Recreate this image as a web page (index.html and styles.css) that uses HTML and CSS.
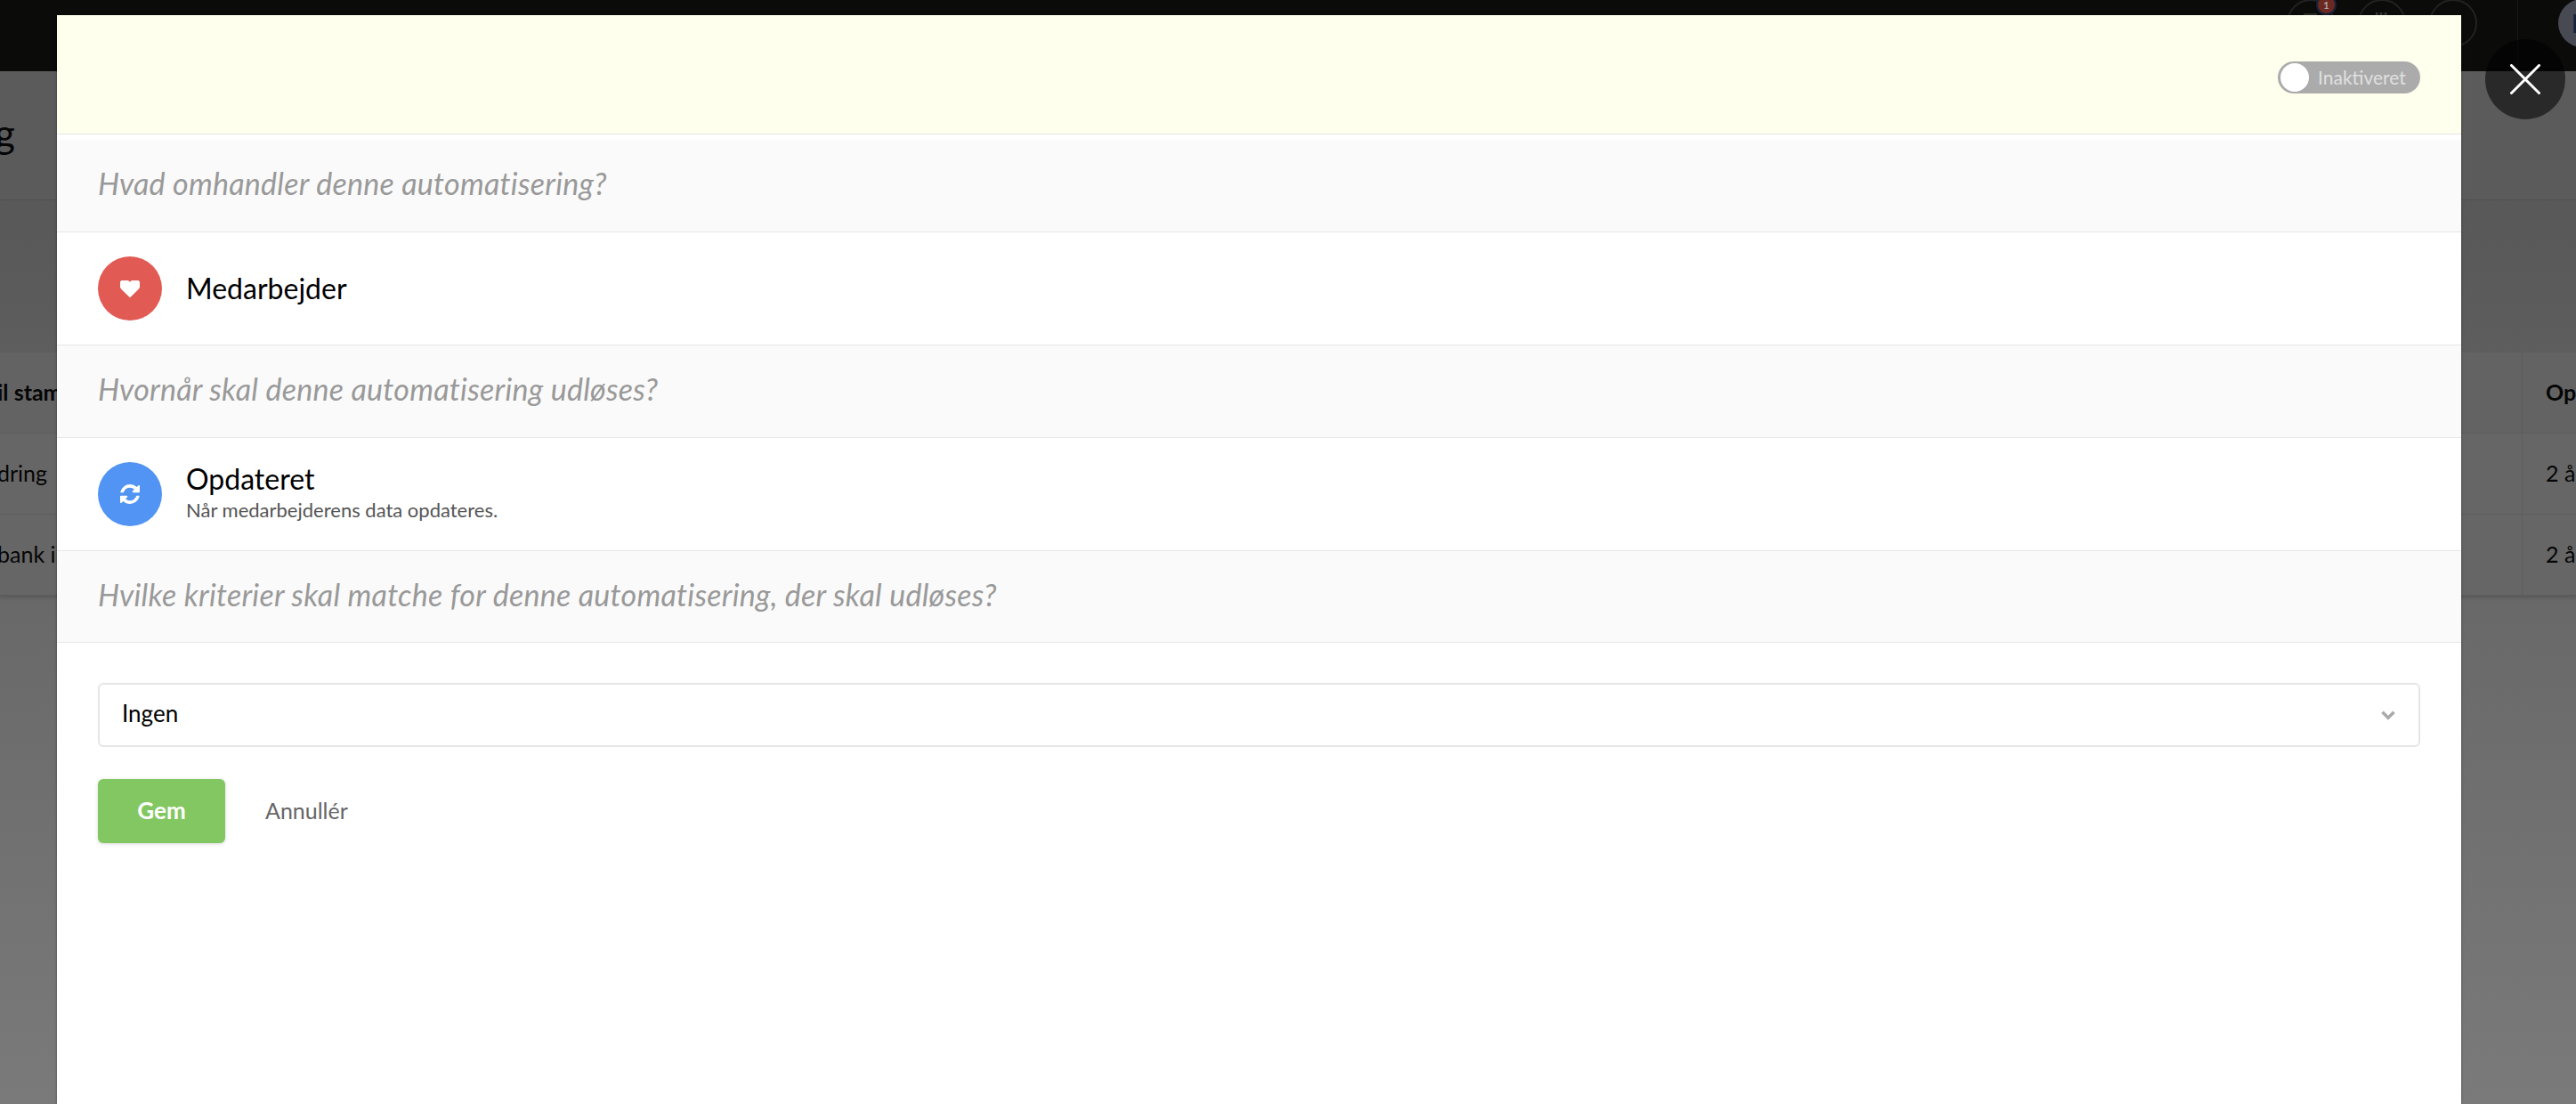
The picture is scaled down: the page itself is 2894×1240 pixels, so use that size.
FILE: index.html
```html
<!DOCTYPE html>
<html lang="da">
<head>
<meta charset="utf-8">
<title>Automatisering</title>
<link rel="stylesheet" href="styles.css">
</head>
<body>
<div class="page">
  <header class="topbar">
    <div class="nav-circle nav-bell"><span class="badge">1</span></div>
    <div class="nav-circle nav-cal"></div>
    <div class="nav-circle"></div>
    <div class="nav-divider"></div>
    <div class="avatar">E</div>
  </header>
  <div class="subheader"><h1 class="page-title">g</h1></div>
  <div class="table">
    <div class="table-row table-head"><div class="cell-main">il stamdata</div><div class="cell-end">Opdateret</div></div>
    <div class="table-row"><div class="cell-main">dring</div><div class="cell-end">2 år siden</div></div>
    <div class="table-row"><div class="cell-main">bank ikke</div><div class="cell-end">2 år siden</div></div>
  </div>
</div>

<button class="close-btn" aria-label="Luk">
  <svg class="close-icon" viewBox="0 0 34 34"><path d="M1.5 1.5 32.5 32.5M32.5 1.5 1.5 32.5"/></svg>
</button>

<main class="modal">
  <div class="modal-head">
    <div class="toggle"><span class="toggle-knob"></span><span class="toggle-label">Inaktiveret</span></div>
  </div>
  <div class="q-bar q-first">Hvad omhandler denne automatisering?</div>
  <div class="choice">
    <span class="dot dot-red">
      <svg class="icon-heart" viewBox="110 220 1572 1450"><path d="M896 1664q-26 0-44-18l-624-602q-10-8-27.5-26t-55.5-65.5-68-97.5-53.5-121-23.5-138q0-220 127-344t351-124q62 0 126.5 21.5t120 58 95.5 68.5 76 68q36-36 76-68t95.5-68.5 120-58 126.5-21.5q224 0 351 124t127 344q0 221-229 450l-623 600q-18 18-44 18z"/></svg>
    </span>
    <div class="choice-text"><div class="choice-title">Medarbejder</div></div>
  </div>
  <div class="q-bar">Hvornår skal denne automatisering udløses?</div>
  <div class="choice">
    <span class="dot dot-blue">
      <svg class="icon-refresh" viewBox="128 128 1536 1536"><path d="M1639 1056q0 5-1 7-64 268-268 434.5t-478 166.5q-146 0-282.5-55t-243.5-157l-129 129q-19 19-45 19t-45-19-19-45v-448q0-26 19-45t45-19h448q26 0 45 19t19 45-19 45l-137 137q71 66 161 102t187 36q134 0 250-65t186-179q11-17 53-117 8-23 30-23h192q13 0 22.5 9.5t9.5 22.5zm25-800v448q0 26-19 45t-45 19h-448q-26 0-45-19t-19-45 19-45l138-138q-148-137-349-137-134 0-250 65t-186 179q-11 17-53 117-8 23-30 23h-199q-13 0-22.5-9.5t-9.5-22.5v-7q65-268 270-434.5t480-166.5q146 0 284 55.5t245 156.5l130-129q19-19 45-19t45 19 19 45z"/></svg>
    </span>
    <div class="choice-text">
      <div class="choice-title">Opdateret</div>
      <div class="choice-sub">Når medarbejderens data opdateres.</div>
    </div>
  </div>
  <div class="q-bar q-last">Hvilke kriterier skal matche for denne automatisering, der skal udløses?</div>
  <div class="form">
    <div class="select">
      <span>Ingen</span>
      <svg class="chevron" viewBox="0 0 16 11"><path d="M1.5 1.8 8 8.3 14.5 1.8"/></svg>
    </div>
    <div class="actions">
      <button class="btn-save">Gem</button>
      <span class="btn-cancel">Annullér</span>
    </div>
  </div>
</main>
</body>
</html>
```
FILE: styles.css
```css
* { box-sizing: border-box; }
html, body { margin: 0; height: 100%; }
body {
  width: 2894px;
  height: 1240px;
  overflow: hidden;
  position: relative;
  font-family: "Lato", "Liberation Sans", sans-serif;
  background: #6a6a6a;
}

/* dimmed page behind the modal */
.page {
  height: 1240px;
  display: flex;
  flex-direction: column;
  background: linear-gradient(to bottom, #555 0, #5a5a5a 300px, #6a6a6a 720px, #7a7a7a 1240px);
  color: #050505;
}
.topbar {
  height: 80px;
  flex: none;
  background: #0b0b0a;
  display: flex;
  justify-content: flex-end;
  align-items: center;
  overflow: hidden;
}
.nav-circle {
  width: 54px;
  height: 54px;
  margin: -28px 0 0 26px;
  border: 2px solid #222;
  border-radius: 50%;
  position: relative;
  flex: none;
}
.nav-bell::before {
  content: "";
  position: absolute;
  left: 17px;
  top: 14px;
  width: 15px;
  height: 2px;
  background: #2c2c2c;
}
.nav-cal::before {
  content: "";
  position: absolute;
  left: 18px;
  top: 13px;
  width: 14px;
  height: 3px;
  background: repeating-linear-gradient(to right, #3a3a3a 0 2px, #161616 2px 5px);
}
.badge {
  position: absolute;
  top: -5px;
  right: -2px;
  width: 19px;
  height: 19px;
  border-radius: 50%;
  background: #6e2822;
  box-shadow: 0 0 0 2px #15233a;
  color: #a9a9a9;
  font-size: 11px;
  line-height: 19px;
  text-align: center;
  font-weight: 700;
}
.nav-divider {
  width: 1px;
  height: 80px;
  background: #191919;
  margin-left: 45px;
  flex: none;
}
.avatar {
  width: 54px;
  height: 54px;
  flex: none;
  margin: -28px -34px 0 45px;
  border-radius: 50%;
  background: #474a52;
  color: #14233d;
  font-size: 28px;
  font-weight: 700;
  line-height: 54px;
  padding-left: 15px;
}
.subheader {
  height: 145px;
  flex: none;
  border-bottom: 1px solid #505050;
  background: #5b5b5b;
  display: flex;
  align-items: center;
}
.page-title {
  margin: -6px 0 0 -6px;
  font-size: 44px;
  font-weight: 400;
}
.table {
  margin-top: 170px;
  border-bottom: 2px solid #5c5c5c;
  box-shadow: 0 2px 3px rgba(0,0,0,.12);
  background: #666;
}
.table-row {
  height: 91px;
  display: flex;
  justify-content: space-between;
  align-items: center;
  font-size: 25px;
  border-top: 1px solid #5d5d5d;
}
.table-head { font-weight: 700; background: #636363; }
.cell-main { white-space: nowrap; margin: -3px 0 0 -3px; }
.cell-end {
  align-self: stretch;
  width: 61px;
  border-left: 1px solid #5d5d5d;
  padding: 0 0 3px 26px;
  white-space: nowrap;
  overflow: hidden;
  display: flex;
  align-items: center;
}

.close-btn {
  position: absolute;
  left: 2792px;
  top: 44px;
  width: 90px;
  height: 90px;
  padding: 0;
  border: 0;
  border-radius: 50%;
  background: rgba(0,0,0,.55);
  display: flex;
  align-items: center;
  justify-content: center;
}
.close-icon { width: 34px; height: 34px; }
.close-icon path { fill: none; stroke: #fff; stroke-width: 3px; stroke-linecap: round; }

/* modal */
.modal {
  position: absolute;
  left: 64px;
  top: 17px;
  width: 2701px;
  height: 1223px;
  background: #fff;
  box-shadow: 0 0 3px rgba(0,0,0,.35);
}
.modal-head {
  height: 134px;
  background: #ffffee;
  border-bottom: 1px solid #e4e4e4;
  display: flex;
  align-items: center;
  justify-content: flex-end;
  padding: 7px 46px 0 0;
}
.toggle {
  width: 160px;
  height: 36px;
  border-radius: 18px;
  background: #ababab;
  display: flex;
  align-items: center;
  padding-left: 3px;
}
.toggle-knob {
  width: 32px;
  height: 32px;
  border-radius: 50%;
  background: #fff;
  flex: none;
}
.toggle-label {
  margin-left: 10px;
  margin-top: -2px;
  font-size: 21px;
  color: #e0e0e0;
  line-height: 1;
}
.q-bar {
  height: 104px;
  padding: 0 0 6px 46px;
  display: flex;
  align-items: center;
  background: #fafafa;
  border-bottom: 1px solid #e6e6e6;
  font-size: 34px;
  letter-spacing: .25px;
  font-style: italic;
  color: #999;
}
.q-first { margin-top: 6px; }
.q-last { height: 103px; }
.choice {
  height: 127px;
  padding-left: 46px;
  display: flex;
  align-items: center;
  border-bottom: 1px solid #e6e6e6;
}
.dot {
  width: 72px;
  height: 72px;
  flex: none;
  border-radius: 50%;
  display: flex;
  align-items: center;
  justify-content: center;
}
.dot-red { background: #e25a54; }
.dot-blue { background: #5294f3; }
.icon-heart { width: 22px; height: 19px; fill: #fff; }
.icon-refresh { width: 22px; height: 22px; fill: #fff; }
.choice-text { margin-left: 27px; }
.choice-title { font-size: 32px; line-height: 36px; color: #000; }
.choice-sub { font-size: 22px; line-height: 34px; color: #555; }
.form { padding: 45px 46px 0; }
.select {
  height: 72px;
  border: 2px solid #e6e6e6;
  border-radius: 6px;
  display: flex;
  align-items: center;
  justify-content: space-between;
  padding: 0 26px 5px 25px;
  font-size: 26px;
  color: #000;
}
.chevron { width: 16px; height: 11px; margin-top: 5px; }
.chevron path { fill: none; stroke: #aaa; stroke-width: 3.5px; }
.actions {
  margin-top: 36px;
  display: flex;
  align-items: center;
}
.btn-save {
  width: 143px;
  height: 72px;
  padding: 0 0 3px;
  border: 0;
  border-radius: 6px;
  background: #82c761;
  box-shadow: 0 1px 4px rgba(0,0,0,.15);
  color: #fff;
  font: 700 26px "Lato", "Liberation Sans", sans-serif;
}
.btn-cancel { margin: -3px 0 0 45px; font-size: 25px; color: #666; }
```
